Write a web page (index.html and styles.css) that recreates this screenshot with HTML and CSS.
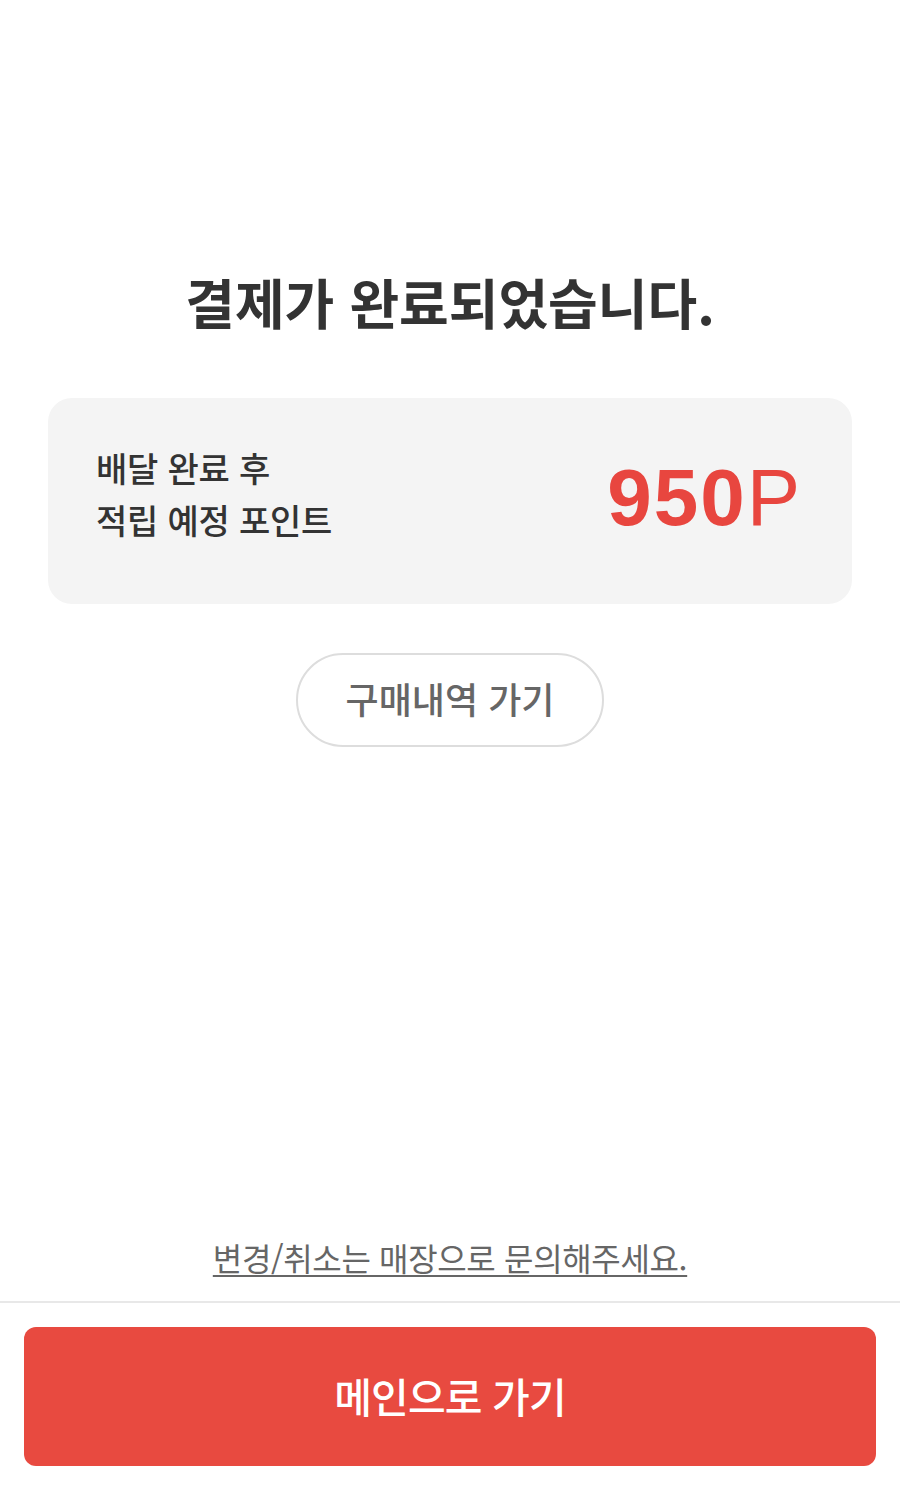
FILE: index.html
```html
<!DOCTYPE html>
<html lang="ko">
<head>
<meta charset="utf-8">
<title>결제 완료</title>
<link rel="stylesheet" href="styles.css">
</head>
<body>
<div class="page">
  <main class="content">
    <h1 class="title">결제가 완료되었습니다.</h1>
    <section class="card">
      <div class="card-label">
        <div>배달 완료 후</div>
        <div>적립 예정 포인트</div>
      </div>
      <div class="points"><span class="num">950</span><span class="unit">P</span></div>
    </section>
    <button class="history-btn" type="button">구매내역 가기</button>
  </main>
  <div class="spacer"></div>
  <p class="notice"><a class="notice-link" href="#">변경/취소는 매장으로 문의해주세요.</a></p>
  <footer class="footer">
    <button class="main-btn" type="button">메인으로 가기</button>
  </footer>
</div>
</body>
</html>
```

FILE: styles.css
```css
* { box-sizing: border-box; }
html, body { margin: 0; padding: 0; background: #ffffff; }
body {
  font-family: "Noto Sans CJK KR", "Noto Sans", sans-serif;
  color: #333333;
}
.page {
  min-height: 1508px;
  display: flex;
  flex-direction: column;
}
.content {
  display: flex;
  flex-direction: column;
  align-items: center;
  padding: 269px 48px 0;
}
.title {
  margin: 0;
  font-size: 54px;
  line-height: 65px;
  font-weight: 700;
  letter-spacing: 0;
  color: #333333;
}
.card {
  margin-top: 64px;
  width: 100%;
  height: 206px;
  background: #f4f4f4;
  border-radius: 24px;
  display: flex;
  align-items: center;
  justify-content: space-between;
  padding: 0 52px 0 48px;
}
.card-label {
  font-size: 34px;
  line-height: 52px;
  font-weight: 500;
  letter-spacing: -0.2px;
  color: #333333;
  padding-bottom: 14px;
}
.points {
  font-family: "Liberation Sans", Arial, sans-serif;
  color: #e8463f;
  font-size: 80px;
  line-height: 1;
  letter-spacing: 2px;
  display: flex;
  align-items: baseline;
  padding-bottom: 6px;
}
.points .num { font-weight: 700; }
.points .unit { font-weight: 400; letter-spacing: 0; }
.history-btn {
  margin-top: 49px;
  width: 308px;
  height: 94px;
  border: 2px solid #dddddd;
  border-radius: 47px;
  background: #ffffff;
  font-family: "Noto Sans CJK KR", "Noto Sans", sans-serif;
  font-size: 36px;
  font-weight: 500;
  letter-spacing: 0;
  color: #666666;
  padding: 0 0 4px;
}
.spacer { flex: 1; }
.notice {
  margin: 0;
  padding: 0 0 20px;
  text-align: center;
  font-size: 32px;
  line-height: 48px;
  letter-spacing: -0.35px;
}
.notice-link {
  color: #666666;
  text-decoration: underline;
  text-underline-offset: 4px;
  text-decoration-thickness: 2px;
}
.footer {
  border-top: 2px solid #e8e8e8;
  padding: 24px 24px 42px;
}
.main-btn {
  display: block;
  width: 100%;
  height: 139px;
  border: none;
  border-radius: 12px;
  background: #e84a40;
  color: #ffffff;
  font-family: "Noto Sans CJK KR", "Noto Sans", sans-serif;
  font-size: 41px;
  font-weight: 500;
  letter-spacing: -0.9px;
  padding: 0 0 4px;
}
```
